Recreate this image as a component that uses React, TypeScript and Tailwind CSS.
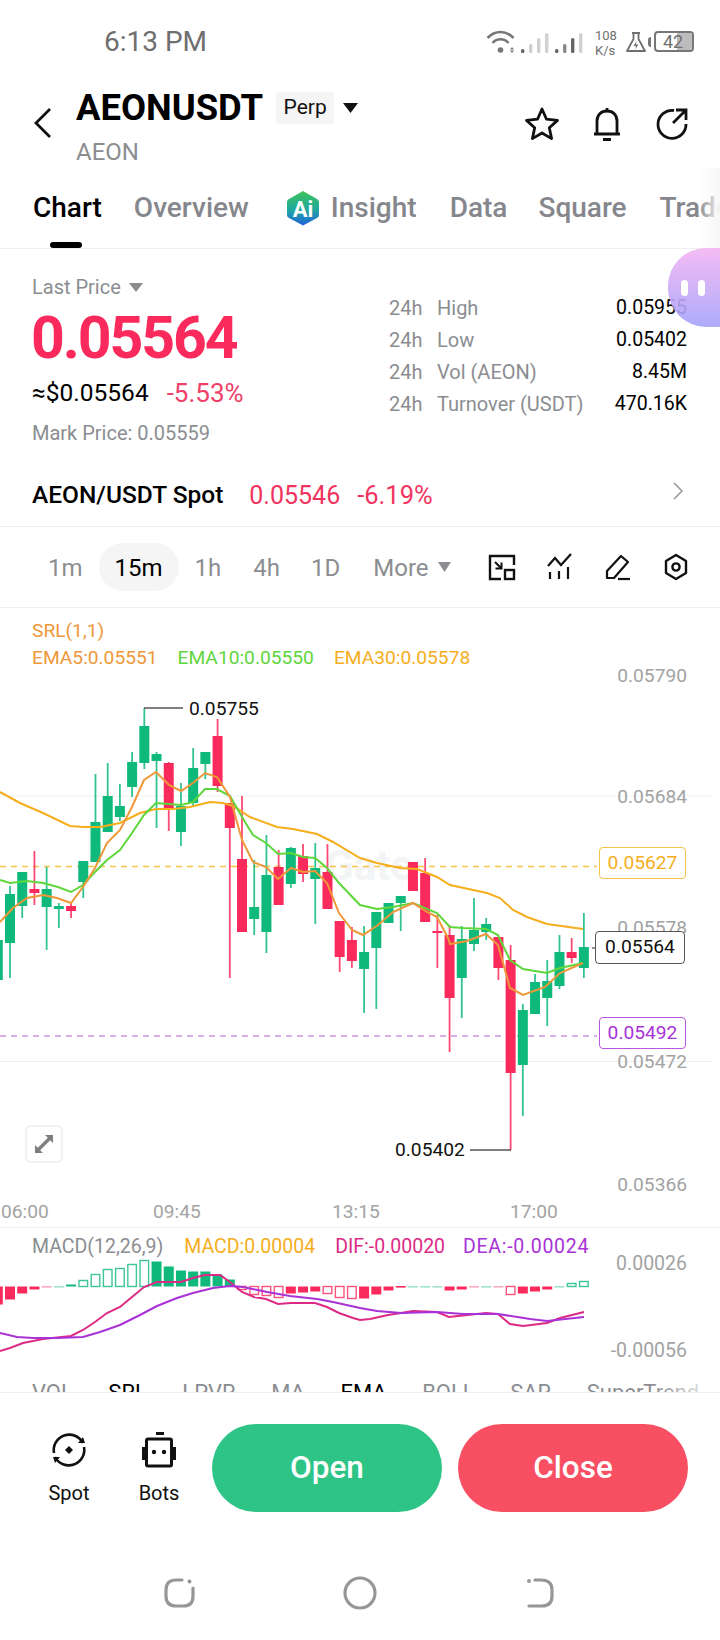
// App.tsx - AEONUSDT perp market screen
import React from "react";

type Pt = [number, number];
// wick top, body top, body bottom, wick bottom
type Candle = ["g" | "r", number, number, number, number];

const GREEN = "#0fb97c";
const RED = "#fb2a5c";

const candles: Candle[] = [
  ["g", 940, 940, 980, 980],
  ["g", 886, 894, 943, 978],
  ["g", 872, 872, 906, 918],
  ["r", 851, 889, 893, 905],
  ["g", 867, 889, 907, 950],
  ["g", 903, 906, 909, 928],
  ["r", 903, 906, 911, 918],
  ["g", 861, 861, 882, 898],
  ["g", 774, 822, 862, 862],
  ["g", 763, 796, 832, 832],
  ["g", 784, 806, 817, 821],
  ["g", 752, 762, 787, 797],
  ["g", 708, 726, 763, 769],
  ["g", 752, 754, 761, 828],
  ["r", 762, 763, 808, 831],
  ["g", 783, 806, 832, 846],
  ["g", 748, 768, 803, 807],
  ["g", 752, 752, 764, 779],
  ["r", 719, 736, 786, 792],
  ["r", 803, 803, 828, 978],
  ["r", 796, 859, 932, 932],
  ["g", 860, 907, 919, 935],
  ["g", 835, 875, 932, 953],
  ["r", 850, 867, 905, 905],
  ["g", 847, 848, 884, 888],
  ["r", 844, 856, 874, 882],
  ["g", 843, 868, 879, 924],
  ["r", 844, 872, 909, 909],
  ["r", 921, 921, 957, 972],
  ["r", 927, 940, 961, 968],
  ["g", 926, 952, 969, 1013],
  ["g", 912, 912, 948, 1009],
  ["g", 903, 903, 923, 923],
  ["g", 896, 896, 903, 931],
  ["r", 862, 862, 891, 891],
  ["r", 858, 873, 922, 922],
  ["r", 915, 931, 933, 968],
  ["r", 925, 935, 998, 1052],
  ["g", 926, 939, 978, 1018],
  ["g", 898, 930, 944, 951],
  ["g", 918, 924, 932, 940],
  ["r", 937, 937, 968, 980],
  ["r", 945, 960, 1073, 1150],
  ["g", 1004, 1010, 1065, 1116],
  ["g", 974, 982, 1014, 1014],
  ["g", 960, 981, 998, 1026],
  ["g", 935, 952, 986, 989],
  ["r", 938, 952, 958, 963],
  ["g", 913, 947, 968, 978],
];

const ema30: Pt[] = [
  [0, 792], [20, 803], [43, 813], [70, 826], [83, 827], [100, 827], [120, 823], [140, 813],
  [156, 809], [173, 809], [190, 807], [210, 802], [223, 803], [233, 806], [250, 817], [277, 827],
  [293, 829], [317, 834], [333, 842], [360, 858], [377, 863], [400, 868], [417, 869], [437, 877],
  [450, 885], [487, 893], [500, 898], [513, 910], [527, 917], [547, 924], [583, 929],
];

const ema5: Pt[] = [
  [0, 922], [13, 908], [27, 898], [43, 895], [57, 898], [71, 903], [83, 887], [95, 868],
  [107, 843], [120, 830], [132, 807], [144, 780], [156, 772], [169, 785], [181, 791], [193, 783],
  [205, 773], [217, 777], [230, 797], [242, 840], [253, 862], [266, 867], [278, 879], [291, 868],
  [303, 872], [315, 871], [327, 883], [339, 913], [352, 930], [363, 935], [378, 925], [393, 912],
  [413, 903], [427, 912], [437, 917], [448, 938], [450, 944], [467, 941], [486, 934], [498, 945],
  [510, 988], [523, 995], [545, 987], [560, 973], [583, 963],
];

const ema10: Pt[] = [
  [0, 880], [10, 883], [27, 881], [43, 883], [58, 887], [71, 892], [83, 885], [95, 872],
  [107, 860], [120, 850], [132, 833], [144, 815], [156, 803], [169, 804], [181, 805], [193, 802],
  [205, 789], [217, 789], [230, 796], [242, 817], [253, 835], [266, 843], [278, 854], [291, 853],
  [303, 857], [315, 858], [327, 868], [339, 883], [360, 905], [377, 909], [393, 907], [413, 903],
  [437, 913], [450, 927], [463, 928], [486, 929], [498, 935], [510, 960], [523, 969], [547, 973],
  [560, 968], [583, 963],
];

const dif: Pt[] = [
  [0, 1351], [10, 1348], [23, 1343], [43, 1339], [71, 1336], [83, 1330], [95, 1322], [107, 1313],
  [120, 1307], [132, 1297], [144, 1287], [157, 1282], [181, 1282], [193, 1278], [205, 1275], [220, 1275],
  [230, 1282], [242, 1292], [254, 1297], [266, 1299], [278, 1304], [291, 1303], [315, 1303], [327, 1307],
  [339, 1313], [353, 1318], [360, 1320], [370, 1319], [388, 1315], [401, 1313], [413, 1311], [437, 1312],
  [449, 1317], [486, 1313], [498, 1314], [510, 1324], [523, 1326], [547, 1323], [560, 1318], [584, 1312],
];

const dea: Pt[] = [
  [0, 1333], [17, 1337], [33, 1338], [57, 1338], [83, 1337], [100, 1332], [120, 1325], [140, 1315],
  [157, 1306], [177, 1298], [193, 1293], [213, 1288], [230, 1286], [243, 1287], [267, 1292], [290, 1296],
  [317, 1299], [333, 1302], [360, 1308], [377, 1311], [401, 1313], [437, 1312], [463, 1314], [498, 1314],
  [530, 1319], [547, 1321], [584, 1317],
];

// signed heights: positive rises above the zero line, negative falls below it
const macdBars: { v: number; hollow?: boolean; faint?: boolean }[] = [
  { v: -18 }, { v: -13 }, { v: -7 }, { v: -3 }, { v: -1, faint: true }, { v: 1, faint: true }, { v: 2 },
  { v: 6, hollow: true }, { v: 12, hollow: true }, { v: 17, hollow: true }, { v: 18, hollow: true },
  { v: 22, hollow: true }, { v: 26, hollow: true }, { v: 25 }, { v: 20 }, { v: 16 }, { v: 15 }, { v: 15 },
  { v: 12 }, { v: 7 }, { v: -3, hollow: true }, { v: -8, hollow: true }, { v: -9, hollow: true },
  { v: -11, hollow: true }, { v: -7 }, { v: -6 }, { v: -5 }, { v: -7, hollow: true }, { v: -11, hollow: true },
  { v: -12, hollow: true }, { v: -12 }, { v: -8 }, { v: -4 }, { v: -1 }, { v: 1, faint: true }, { v: 1, faint: true },
  { v: 0.5, faint: true }, { v: -4 }, { v: -3 }, { v: -1, faint: true }, { v: 1, faint: true }, { v: -1, faint: true },
  { v: -8, hollow: true }, { v: -7 }, { v: -5 }, { v: -3 }, { v: 1, faint: true }, { v: 3, hollow: true },
  { v: 5, hollow: true },
];

const candleX = (i: number) => -2.2 + 12.21 * i;
const points = (pts: Pt[]) => pts.map(([x, y]) => `${x},${y}`).join(" ");

const StatusBar = () => (
  <div className="flex h-[75px] items-center pt-[8px] text-[#6f6f6f]">
    <span className="ml-[104px] text-[28px] leading-none">6:13 PM</span>
    <svg className="ml-auto" width="106" height="30" viewBox="0 0 106 30">
      <g fill="none" stroke="#777" strokeWidth="2.6">
        <path d="M1.5 11 C9 3 20 3 27.5 11" />
        <path d="M6.5 16 C11 11 18 11 22.5 16" />
      </g>
      <circle cx="14.5" cy="23" r="2.8" fill="#777" />
      <path d="M26 20l-2 2.4h4z M26 26l-2-2.4h4z" fill="#777" />
      <rect x="35" y="22" width="3.4" height="4" rx="1.5" fill="#666" />
      <rect x="43" y="17" width="3.4" height="9" rx="1.5" fill="#cfcfcf" />
      <rect x="51" y="11" width="3.4" height="15" rx="1.5" fill="#cfcfcf" />
      <rect x="59" y="6" width="3.4" height="20" rx="1.5" fill="#d2d2d2" />
      <rect x="69" y="22" width="3.4" height="4" rx="1.5" fill="#666" />
      <rect x="77" y="17" width="3.4" height="9" rx="1.5" fill="#888" />
      <rect x="85" y="11" width="3.4" height="15" rx="1.5" fill="#666" />
      <rect x="93" y="6" width="3.4" height="20" rx="1.5" fill="#d2d2d2" />
    </svg>
    <div className="ml-[3px] mt-[2px] flex w-[22px] flex-col text-[13px] leading-[15px]">
      <span>108</span>
      <span>K/s</span>
    </div>
    <svg className="ml-[8px]" width="22" height="22" viewBox="0 0 22 22">
      <path d="M7 2h8M8.5 2v6L2 20h18L13.5 8V2" fill="none" stroke="#6f6f6f" strokeWidth="1.8" strokeLinejoin="round" />
      <path d="M11.5 10l-3 5h2.6l-1 3.5 3.4-5h-2.6z" fill="#6f6f6f" />
    </svg>
    <div className="ml-[1px] mr-[3px] h-[10px] w-[3px] rounded-l-sm bg-[#777]" />
    <div className="relative mr-[26px] flex h-[21px] w-[40px] items-center overflow-hidden rounded-[4px] border-2 border-[#777]">
      <div className="absolute bottom-0 right-0 top-0 w-[15px] bg-[#bcbcbc]" />
      <span className="relative ml-[7px] text-[18px] leading-none">42</span>
    </div>
  </div>
);

const Header = () => (
  <div className="flex h-[93px] items-center pr-[28px]">
    <svg className="ml-[32px] mt-[3px]" width="22" height="32" viewBox="0 0 22 32">
      <path d="M18 2 L4 16 L18 30" fill="none" stroke="#111" strokeWidth="2.8" />
    </svg>
    <div className="ml-[22px] mt-[12px] flex flex-col">
      <div className="flex items-center">
        <span className="text-[36.4px] font-bold leading-[38px] text-black">AEONUSDT</span>
        <span className="ml-[13px] flex h-[32px] w-[58px] items-center justify-center rounded-[4px] bg-[#f5f5f5] text-[21px] text-[#111]">
          Perp
        </span>
        <svg className="ml-[9px]" width="15" height="10" viewBox="0 0 15 10">
          <path d="M0 0h15L7.5 10z" fill="#111" />
        </svg>
      </div>
      <span className="mt-[12px] text-[24px] leading-[27px] text-[#8b8d91]">AEON</span>
    </div>
    <div className="ml-auto mt-[5px] flex items-center gap-[25px]">
      <svg width="40" height="40" viewBox="0 0 40 40">
        <path
          d="M20 5 L24.5 15.2 L35.5 16.4 L27.3 23.7 L29.6 34.6 L20 29 L10.4 34.6 L12.7 23.7 L4.5 16.4 L15.5 15.2 Z"
          fill="none"
          stroke="#111"
          strokeWidth="2.8"
          strokeLinejoin="round"
        />
      </svg>
      <svg width="40" height="40" viewBox="0 0 40 40">
        <path
          d="M7 30 H33 M10 30 V17 C10 11 14 7 20 7 C26 7 30 11 30 17 V30 M16 35.5 H24 M20 4 V7"
          fill="none"
          stroke="#111"
          strokeWidth="2.8"
        />
      </svg>
      <svg width="40" height="40" viewBox="0 0 40 40">
        <path
          d="M22 6.5 A14 14 0 1 0 34 20 M21 19 L33 7 M24 6 H34 V16"
          fill="none"
          stroke="#111"
          strokeWidth="2.8"
        />
      </svg>
    </div>
  </div>
);

const Tabs = () => (
  <div className="relative flex h-[81px] items-start overflow-hidden border-b border-[#eeeeee] pl-[33px] pt-[22px]">
    <div className="flex items-center gap-[32px] whitespace-nowrap text-[28px] font-medium leading-[34px] text-[#85878c]">
      <span className="text-black">Chart</span>
      <span>Overview</span>
      <span className="ml-[5px] flex items-center gap-[11px]">
        <svg width="34" height="36" viewBox="0 0 34 36">
          <defs>
            <linearGradient id="insightHex" x1="0" y1="0" x2="0" y2="1">
              <stop offset="0%" stopColor="#3fc35a" />
              <stop offset="55%" stopColor="#1fa8a0" />
              <stop offset="100%" stopColor="#1f63d8" />
            </linearGradient>
          </defs>
          <path
            d="M17 1 L31 9 Q33 10 33 12 V25 Q33 27 31 28 L17 35.5 L3 28 Q1 27 1 25 V12 Q1 10 3 9 Z"
            fill="url(#insightHex)"
          />
          <text x="17" y="27" textAnchor="middle" fontSize="22" fontWeight="700" fill="#fff" fontFamily="Roboto, sans-serif">
            Ai
          </text>
        </svg>
        Insight
      </span>
      <span className="ml-[1px]">Data</span>
      <span className="ml-[-1px]">Square</span>
      <span className="ml-[1px]">Trade</span>
    </div>
    <div className="absolute bottom-0 left-[50px] h-[6px] w-[32px] rounded-full bg-black" />
    <div className="absolute bottom-0 right-0 top-0 w-[22px] bg-gradient-to-r from-transparent to-[#f7f7f7]" />
  </div>
);

const stats = [
  ["High", "0.05955"],
  ["Low", "0.05402"],
  ["Vol (AEON)", "8.45M"],
  ["Turnover (USDT)", "470.16K"],
];

const PriceSection = () => (
  <div className="relative flex h-[211px] pl-[32px] pr-[33px]">
    <div className="flex w-[357px] flex-col">
      <div className="mt-[25px] flex items-center text-[20px] leading-[26px] text-[#8b8d91]">
        Last Price
        <svg className="ml-[8px]" width="14" height="9" viewBox="0 0 14 9">
          <path d="M0 0h14L7 9z" fill="#8b8d91" />
        </svg>
      </div>
      <div className="ml-[-1px] mt-[8px] text-[59px] font-bold leading-[60px] tracking-[-2.1px] text-[#fb2a5c]">0.05564</div>
      <div className="mt-[10px] flex items-center leading-[30px]">
        <span className="text-[24.5px] text-black">≈$0.05564</span>
        <span className="ml-[18px] text-[26px] text-[#f0406a]">-5.53%</span>
      </div>
      <div className="mt-[12px] text-[20px] leading-[26px] text-[#8b8d91]">Mark Price: 0.05559</div>
    </div>
    <div className="mt-[43px] flex w-[298px] flex-col text-[20px] leading-[32px]">
      {stats.map(([name, value]) => (
        <div key={name} className="flex">
          <span className="w-[48px] text-[#8b8d91]">24h</span>
          <span className="text-[#8b8d91]">{name}</span>
          <span className="ml-auto text-[19.5px] text-black">{value}</span>
        </div>
      ))}
    </div>
  </div>
);

const SpotRow = () => (
  <div className="flex h-[67px] items-center border-b border-[#eeeeee] pl-[32px] pr-[36px] pt-[5px]">
    <span className="text-[24.5px] font-medium text-black">AEON/USDT Spot</span>
    <span className="ml-[26px] text-[25px] text-[#f0345f]">0.05546</span>
    <span className="ml-[17px] text-[25.5px] text-[#f0345f]">-6.19%</span>
    <svg className="mb-[10px] ml-auto" width="12" height="18" viewBox="0 0 12 18">
      <path d="M2 1 L10 9 L2 17" fill="none" stroke="#9a9a9a" strokeWidth="1.6" />
    </svg>
  </div>
);

const IntervalRow = () => (
  <div className="flex h-[81px] items-center border-b border-[#eeeeee] pl-[32px] pr-[30px] text-[24px] text-[#8b8d91]">
    <span className="px-[16px] pt-[2px]">1m</span>
    <span className="flex h-[48px] items-center rounded-full bg-[#f5f5f5] px-[16px] pt-[2px] text-black">15m</span>
    <span className="px-[16px] pt-[2px]">1h</span>
    <span className="px-[16px] pt-[2px]">4h</span>
    <span className="pl-[15px] pr-[16px] pt-[2px]">1D</span>
    <span className="flex items-center pl-[17px] pt-[2px]">
      More
      <svg className="mb-[3px] ml-[9px]" width="13" height="10" viewBox="0 0 13 10">
        <path d="M0 0h13L6.5 10z" fill="#8b8d91" />
      </svg>
    </span>
    <div className="ml-auto flex items-center gap-[30px]">
      <svg width="28" height="28" viewBox="0 0 28 28" fill="none" stroke="#111" strokeWidth="2.4">
        <path d="M13 26 H2 V3 H26 V12" />
        <path d="M7 9 L13 15 M13.5 9.5 V15.5 H7.5" strokeWidth="2" />
        <rect x="17" y="17" width="9" height="9" />
      </svg>
      <svg width="28" height="28" viewBox="0 0 28 28" fill="none" stroke="#111" strokeWidth="2.2">
        <path d="M2 13 L9 5 L15 12 L25 1" />
        <path d="M4 19 V26 M13 18 V26 M22 14 V26" />
      </svg>
      <svg width="28" height="28" viewBox="0 0 28 28" fill="none" stroke="#111" strokeWidth="2.2">
        <path d="M3 25 V18 L17 3 L24 9 L10 25 Z" strokeLinejoin="round" />
        <path d="M14 26 H26" />
      </svg>
      <svg width="28" height="28" viewBox="0 0 28 28" fill="none" stroke="#111" strokeWidth="2.4">
        <path d="M14 2 L24 8 V20 L14 26 L4 20 V8 Z" strokeLinejoin="round" />
        <circle cx="14" cy="14" r="3.6" />
      </svg>
    </div>
  </div>
);

const axisLabels: [string, number][] = [
  ["0.05790", 675],
  ["0.05684", 796],
  ["0.05578", 927],
  ["0.05472", 1061],
  ["0.05366", 1184],
];

const timeLabels: [string, number][] = [
  ["06:00", 1],
  ["09:45", 153],
  ["13:15", 332],
  ["17:00", 510],
];

const PriceChart = () => (
  <div className="relative h-[619px] overflow-hidden text-[19.2px]">
    <svg className="absolute inset-0" width="720" height="619" viewBox="0 608 720 619">
      <line x1="0" y1="796" x2="712" y2="796" stroke="#eef0f1" />
      <line x1="0" y1="1061.5" x2="712" y2="1061.5" stroke="#eef0f1" />
      <text x="325" y="880" fontSize="42" fontWeight="700" fill="#f2f4f5" fontFamily="Roboto, sans-serif">
        Gate
      </text>
      <line x1="0" y1="866.5" x2="597" y2="866.5" stroke="#f5c24a" strokeWidth="1.4" strokeDasharray="6 5" />
      <line x1="0" y1="1036" x2="597" y2="1036" stroke="#cc96e2" strokeWidth="1.6" strokeDasharray="6 5" />
      {candles.map(([side, wickTop, bodyTop, bodyBottom, wickBottom], i) => {
        const x = candleX(i);
        const fill = side === "g" ? GREEN : RED;
        return (
          <g key={i}>
            <rect x={x - 0.9} y={wickTop} width="1.8" height={wickBottom - wickTop} fill={fill} opacity="0.85" />
            <rect x={x - 5} y={bodyTop} width="10" height={bodyBottom - bodyTop} fill={fill} />
          </g>
        );
      })}
      <polyline points={points(ema30)} fill="none" stroke="#f6ae1d" strokeWidth="2" />
      <polyline points={points(ema10)} fill="none" stroke="#5fd63c" strokeWidth="2" />
      <polyline points={points(ema5)} fill="none" stroke="#ee983a" strokeWidth="2" />
      <path d="M144 708 H183" fill="none" stroke="#555" strokeWidth="1.3" />
      <path d="M470 1150 H511" fill="none" stroke="#555" strokeWidth="1.3" />
      <path d="M592 948 H596" fill="none" stroke="#555" strokeWidth="1.3" />
    </svg>

    <div className="absolute left-[32px] top-[11px] leading-[24px] text-[#ee983a]">SRL(1,1)</div>
    <div className="absolute left-[32px] top-[38px] flex gap-[20px] whitespace-nowrap leading-[24px]">
      <span className="text-[#ee983a]">EMA5:0.05551</span>
      <span className="text-[#5fd63c]">EMA10:0.05550</span>
      <span className="text-[#f6ae1d]">EMA30:0.05578</span>
    </div>

    {axisLabels.map(([label, y]) => (
      <span key={label} className="absolute right-[33px] leading-[24px] text-[#a3a3a3]" style={{ top: y - 619 }}>
        {label}
      </span>
    ))}
    {timeLabels.map(([label, x]) => (
      <span key={label} className="absolute top-[592px] leading-[24px] text-[#a3a3a3]" style={{ left: x }}>
        {label}
      </span>
    ))}

    <span className="absolute left-[189px] top-[89px] leading-[24px] text-[#111]">0.05755</span>
    <span className="absolute left-[395px] top-[530px] leading-[24px] text-[#111]">0.05402</span>

    <span className="absolute left-[599px] top-[239px] flex h-[32px] w-[87px] items-center justify-center rounded-[4px] border border-[#f5c24a] bg-white text-[#f6ae1d]">
      0.05627
    </span>
    <span className="absolute left-[595px] top-[323px] flex h-[33px] w-[90px] items-center justify-center rounded-[4px] border border-[#555] bg-white text-[#111]">
      0.05564
    </span>
    <span className="absolute left-[599px] top-[409px] flex h-[32px] w-[87px] items-center justify-center rounded-[4px] border border-[#b956dd] bg-white text-[#a832d6]">
      0.05492
    </span>

    <div className="absolute left-[25px] top-[517px] flex h-[38px] w-[38px] items-center justify-center rounded-[6px] border-2 border-[#f1f1f1] bg-white">
      <svg width="20" height="20" viewBox="0 0 20 20">
        <path d="M11 1 H19 V9 L16.2 6.2 L6.2 16.2 L9 19 H1 V11 L3.8 13.8 L13.8 3.8 Z" fill="#7f7f7f" />
      </svg>
    </div>
  </div>
);

const MacdPanel = () => (
  <div className="relative h-[133px] overflow-hidden border-t border-[#eeeeee] text-[19.5px]">
    <svg className="absolute inset-0" width="720" height="132" viewBox="0 1228 720 132">
      {macdBars.map(({ v, hollow, faint }, i) => {
        const x = candleX(i);
        const up = v > 0;
        const color = up ? GREEN : RED;
        const h = Math.abs(v);
        const y = up ? 1286.5 - h : 1286.5;
        if (h <= 1) {
          return <rect key={i} x={x - 5} y={1286} width="10" height="1.6" fill={color} opacity={faint ? 0.4 : 1} />;
        }
        return hollow ? (
          <rect key={i} x={x - 4.3} y={y} width="8.6" height={h} fill="#fff" stroke={color} strokeWidth="1.4" opacity="0.8" />
        ) : (
          <rect key={i} x={x - 5} y={y} width="10" height={h} fill={color} />
        );
      })}
      <polyline points={points(dif)} fill="none" stroke="#dc2a85" strokeWidth="2" />
      <polyline points={points(dea)} fill="none" stroke="#a832d6" strokeWidth="2" />
    </svg>
    <div className="absolute left-[32px] top-[7px] flex whitespace-nowrap leading-[24px]">
      <span className="text-[#8b8d91]">MACD(12,26,9)</span>
      <span className="ml-[21px] text-[#f6ae1d]">MACD:0.00004</span>
      <span className="ml-[20px] text-[#dc2a85]">DIF:-0.00020</span>
      <span className="ml-[18px] tracking-[0.7px] text-[#a832d6]">DEA:-0.00024</span>
    </div>
    <span className="absolute right-[33px] top-[24px] leading-[24px] text-[#a3a3a3]">0.00026</span>
    <span className="absolute right-[33px] top-[111px] leading-[24px] text-[#a3a3a3]">-0.00056</span>
  </div>
);

const indicators: [string, boolean][] = [
  ["VOL", false],
  ["SRL", true],
  ["LPVR", false],
  ["MA", false],
  ["EMA", true],
  ["BOLL", false],
  ["SAR", false],
  ["SuperTrend", false],
];

const IndicatorTabs = () => (
  <div className="relative h-[33px] overflow-hidden border-b border-[#eeeeee] pl-[32px] pt-[20px]">
    <div className="flex gap-[35.5px] whitespace-nowrap text-[22px] leading-[26px]">
      {indicators.map(([name, active]) => (
        <span key={name} className={active ? "text-black" : "text-[#8b8d91]"}>
          {name}
        </span>
      ))}
    </div>
    <div className="absolute bottom-0 right-0 top-0 w-[70px] bg-gradient-to-r from-transparent to-white" />
  </div>
);

const ActionBar = () => (
  <div className="flex h-[162px] items-start pl-[34px] pr-[32px] pt-[31px]">
    <div className="flex w-[70px] flex-col items-center">
      <svg className="mt-[7px]" width="36" height="38" viewBox="0 0 36 38" fill="none" stroke="#111" strokeWidth="2.6">
        <path d="M3 22 A15.5 15.5 0 0 1 32 12" />
        <path d="M33 16 A15.5 15.5 0 0 1 4 26" />
        <path d="M27 12 H34 L32 6 Z M9 26 H2 L4 32 Z" fill="#111" stroke="none" />
        <path d="M18 15 L22 19 L18 23 L14 19 Z" fill="#111" stroke="none" />
      </svg>
      <span className="mt-[11px] text-[20px] leading-[26px] text-[#111]">Spot</span>
    </div>
    <div className="ml-[20px] flex w-[70px] flex-col items-center">
      <svg className="mt-[7px]" width="36" height="38" viewBox="0 0 36 38">
        <rect x="15" y="1" width="8" height="3" fill="#111" />
        <rect x="5.5" y="8" width="25" height="27" rx="1.5" fill="none" stroke="#111" strokeWidth="3" />
        <rect x="1" y="16" width="3" height="13" fill="#111" />
        <rect x="32" y="16" width="3" height="13" fill="#111" />
        <circle cx="13" cy="21" r="2.2" fill="#111" />
        <circle cx="23" cy="21" r="2.2" fill="#111" />
      </svg>
      <span className="mt-[11px] text-[20px] leading-[26px] text-[#111]">Bots</span>
    </div>
    <button className="ml-[18px] h-[88px] w-[230px] rounded-full bg-[#2dc486] text-[31.5px] font-medium text-white">Open</button>
    <button className="ml-[16px] h-[88px] w-[230px] rounded-full bg-[#f84f63] text-[31.5px] font-medium text-white">Close</button>
  </div>
);

const NavBar = () => (
  <div className="flex h-[85px] items-start pl-[164px] pt-[21px]">
    <svg className="mt-[2px]" width="32" height="30" viewBox="0 0 32 30" fill="none" stroke="#969696" strokeWidth="3.2" strokeLinecap="round">
      <path d="M18 2 H12 Q2 2 2 12 V18 Q2 28 12 28 H20 Q29 28 29 18 V10" />
      <circle cx="25.5" cy="3.5" r="0.8" fill="#969696" strokeWidth="2.4" />
    </svg>
    <svg className="ml-[147px]" width="34" height="34" viewBox="0 0 34 34" fill="none" stroke="#969696" strokeWidth="3.2">
      <circle cx="17" cy="17" r="15" />
    </svg>
    <svg className="ml-[150px] mt-[2px]" width="28" height="30" viewBox="0 0 28 30" fill="none" stroke="#969696" strokeWidth="3.2" strokeLinecap="round">
      <path d="M8 2 H14 Q25 2 25 12 V18 Q25 28 15 28 H2" />
      <circle cx="2" cy="3" r="0.8" fill="#969696" strokeWidth="2.4" />
    </svg>
  </div>
);

export default function App() {
  return (
    <div className="relative h-[1640px] w-[720px] overflow-hidden bg-white font-['Roboto',sans-serif]">
      <StatusBar />
      <Header />
      <Tabs />
      <PriceSection />
      <SpotRow />
      <IntervalRow />
      <PriceChart />
      <MacdPanel />
      <IndicatorTabs />
      <ActionBar />
      <NavBar />

      {/* floating assistant bubble */}
      <div className="absolute left-[668px] top-[248px] flex h-[79px] w-[60px] items-center gap-[10px] rounded-l-[38px] bg-gradient-to-b from-[#f3b4f2] to-[#a5a2fb] pl-[13px] opacity-90">
        <span className="h-[16px] w-[7px] rounded-full bg-white" />
        <span className="h-[16px] w-[7px] rounded-full bg-white" />
      </div>
    </div>
  );
}
